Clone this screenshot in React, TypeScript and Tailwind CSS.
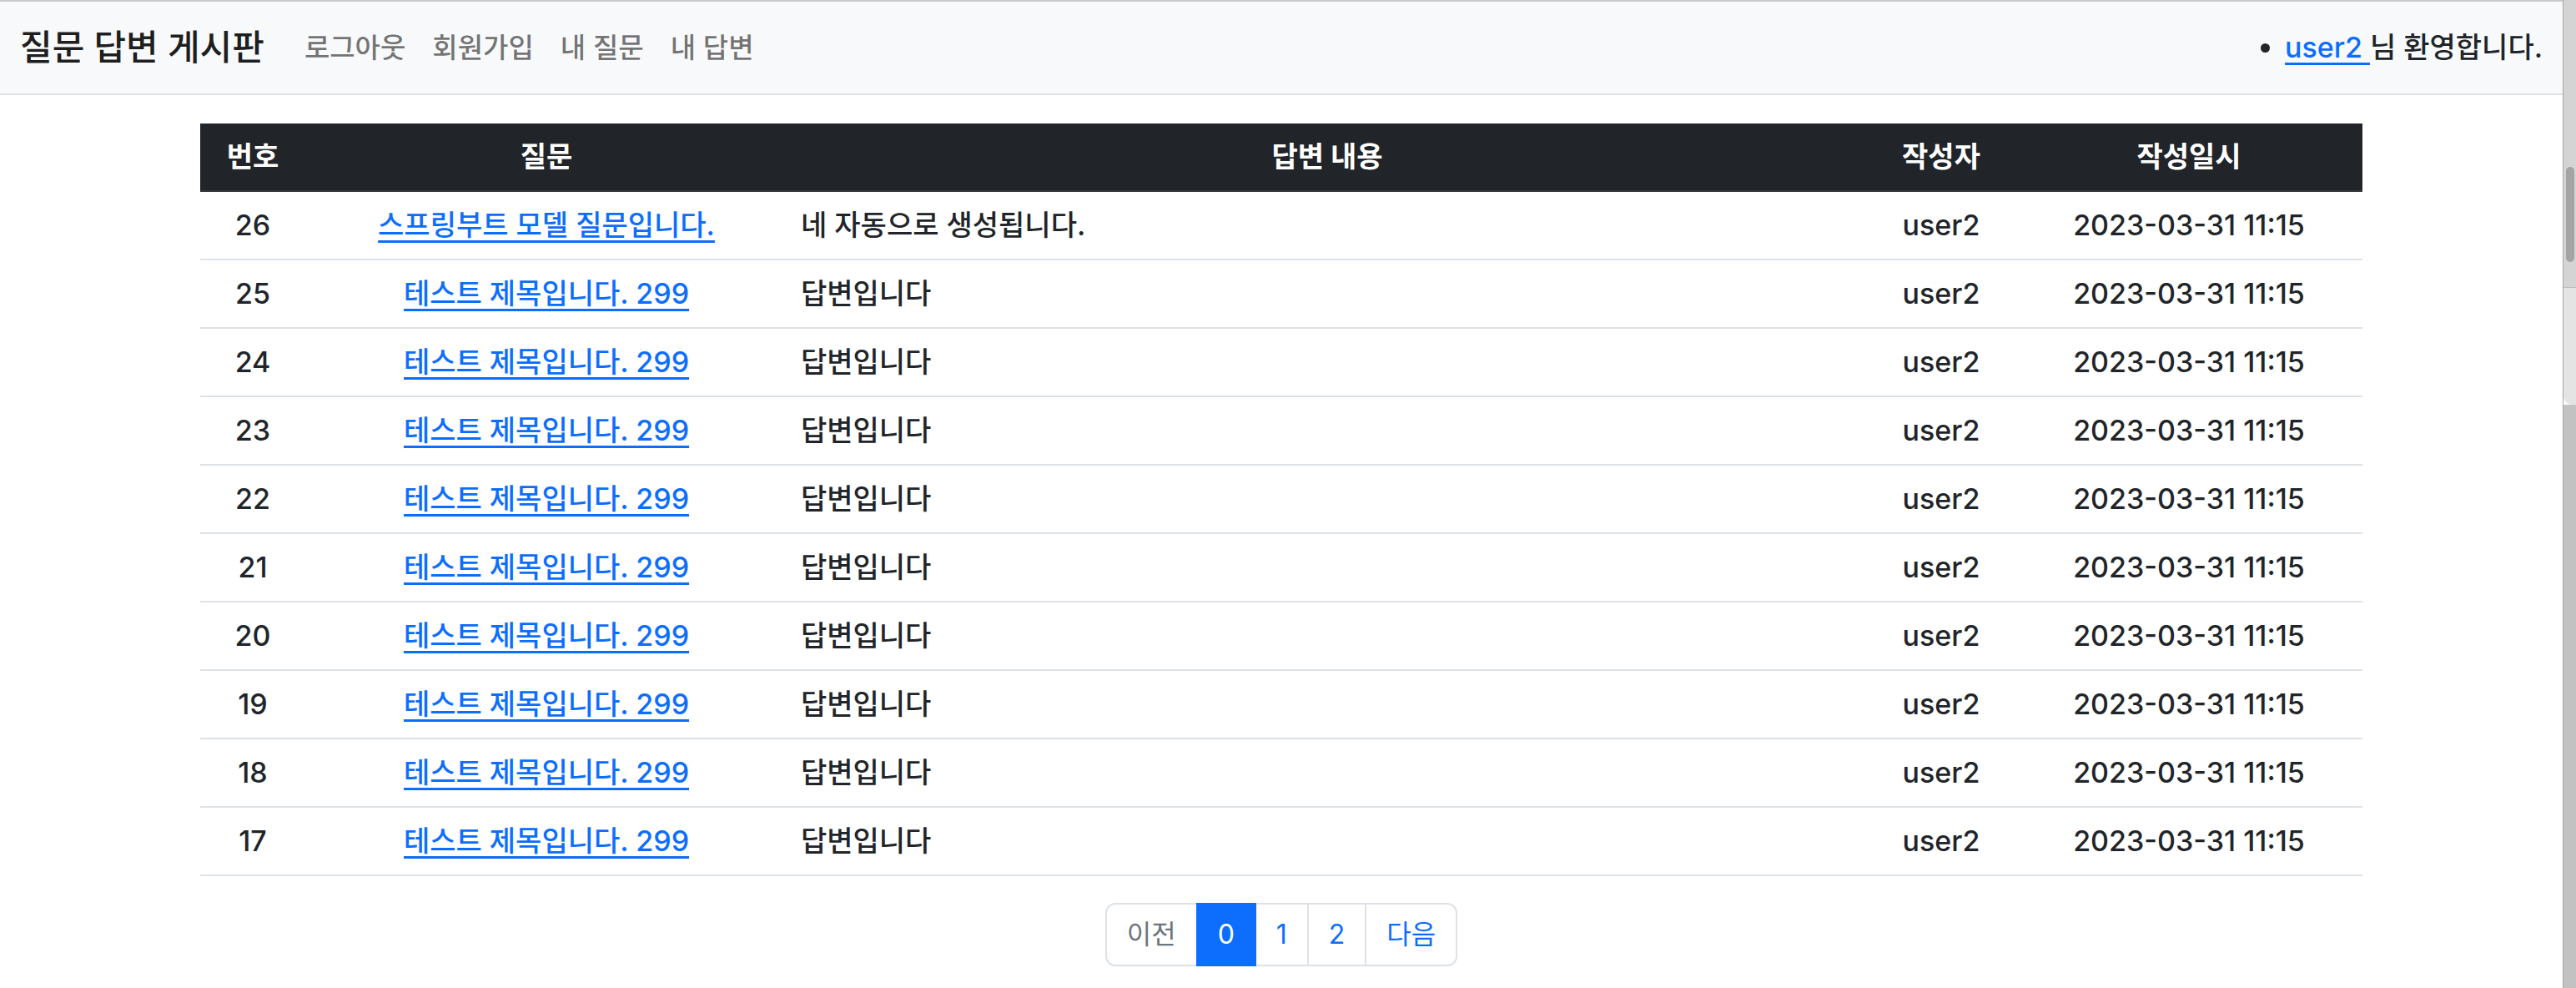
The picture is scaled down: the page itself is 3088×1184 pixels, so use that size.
const rows = [
  { id: 26, subject: "스프링부트 모델 질문입니다.", content: "네 자동으로 생성됩니다." },
  ...[25, 24, 23, 22, 21, 20, 19, 18, 17].map((id) => ({
    id,
    subject: "테스트 제목입니다. 299",
    content: "답변입니다",
  })),
];

const navLinks = ["로그아웃", "회원가입", "내 질문", "내 답변"];

const pages = [
  { label: "이전", kind: "disabled" },
  { label: "0", kind: "active" },
  { label: "1", kind: "link" },
  { label: "2", kind: "link" },
  { label: "다음", kind: "link" },
];

const App = () => {
  return (
    <div className="flex min-h-screen w-full bg-white font-['Inter','Noto_Sans_CJK_KR',sans-serif] font-medium text-[#212529]">
      <div className="flex min-w-0 flex-1 flex-col">
        <div className="h-[2px] bg-[#cbcbcb]" />
        <nav className="flex h-[112px] items-center border-b-2 border-[#dee2e6] bg-[#f8f9fa] px-6">
          <span className="mr-8 text-[42px] leading-[60px] text-black/90">질문 답변 게시판</span>
          <div className="flex">
            {navLinks.map((link, idx) => (
              <a key={idx} className="px-4 text-[33px] leading-[48px] text-black/55">
                {link}
              </a>
            ))}
          </div>
          <ul className="ml-auto list-disc pl-16 text-[34px] leading-[48px]">
            <li>
              <a className="text-[#0d6efd] underline underline-offset-[6px]">user2 </a>
              님 환영합니다.
            </li>
          </ul>
        </nav>

        <main className="mx-auto mt-[34px] w-[2592px]">
          <table className="w-full table-fixed border-collapse text-[34px] leading-[48px]">
            <colgroup>
              <col className="w-[126px]" />
              <col className="w-[578px]" />
              <col className="w-[1294px]" />
              <col className="w-[178px]" />
              <col className="w-[416px]" />
            </colgroup>
            <thead>
              <tr className="border-b-2 border-[#373b3e] bg-[#212529] text-center text-white">
                <th className="px-4 py-4 font-bold">번호</th>
                <th className="px-4 py-4 font-bold">질문</th>
                <th className="px-4 py-4 font-bold">답변 내용</th>
                <th className="px-4 py-4 font-bold">작성자</th>
                <th className="px-4 py-4 font-bold">작성일시</th>
              </tr>
            </thead>
            <tbody>
              {rows.map((row) => (
                <tr key={row.id} className="border-b-2 border-[#dee2e6] text-center">
                  <td className="px-4 py-4">{row.id}</td>
                  <td className="px-4 py-4">
                    <a className="text-[#0d6efd] underline underline-offset-[6px]">{row.subject}</a>
                  </td>
                  <td className="px-4 py-4 text-left">{row.content}</td>
                  <td className="px-4 py-4">user2</td>
                  <td className="px-4 py-4">2023-03-31 11:15</td>
                </tr>
              ))}
            </tbody>
          </table>

          <ul className="mt-8 flex justify-center text-[32px] font-normal leading-[48px]">
            {pages.map((page, idx) => (
              <li key={idx} className={idx > 0 ? "-ml-[2px]" : ""}>
                <a
                  className={
                    "block border-2 px-6 py-3 " +
                    (idx === 0 ? "rounded-l-[12px] " : "") +
                    (idx === pages.length - 1 ? "rounded-r-[12px] " : "") +
                    (page.kind === "active"
                      ? "relative border-[#0d6efd] bg-[#0d6efd] text-white"
                      : page.kind === "disabled"
                      ? "border-[#dee2e6] bg-white text-[#6c757d]"
                      : "border-[#dee2e6] bg-white text-[#0d6efd]")
                  }
                >
                  {page.label}
                </a>
              </li>
            ))}
          </ul>
        </main>
      </div>

      {/* browser scrollbar strip */}
      <div className="flex w-4 flex-col border-l border-[#a6a6a6]">
        <div className="h-[345px] border-b border-[#bdbdbd] bg-[#d4d4d4] pt-[200px]">
          <div className="mx-auto h-[114px] w-[10px] rounded-full bg-[#a4a4a4]" />
        </div>
        <div className="h-[140px] rounded-bl-[10px] bg-[#e4e4e4]" />
        <div className="flex-1 bg-[#c2c2c2]" />
      </div>
    </div>
  );
};

export default App;
